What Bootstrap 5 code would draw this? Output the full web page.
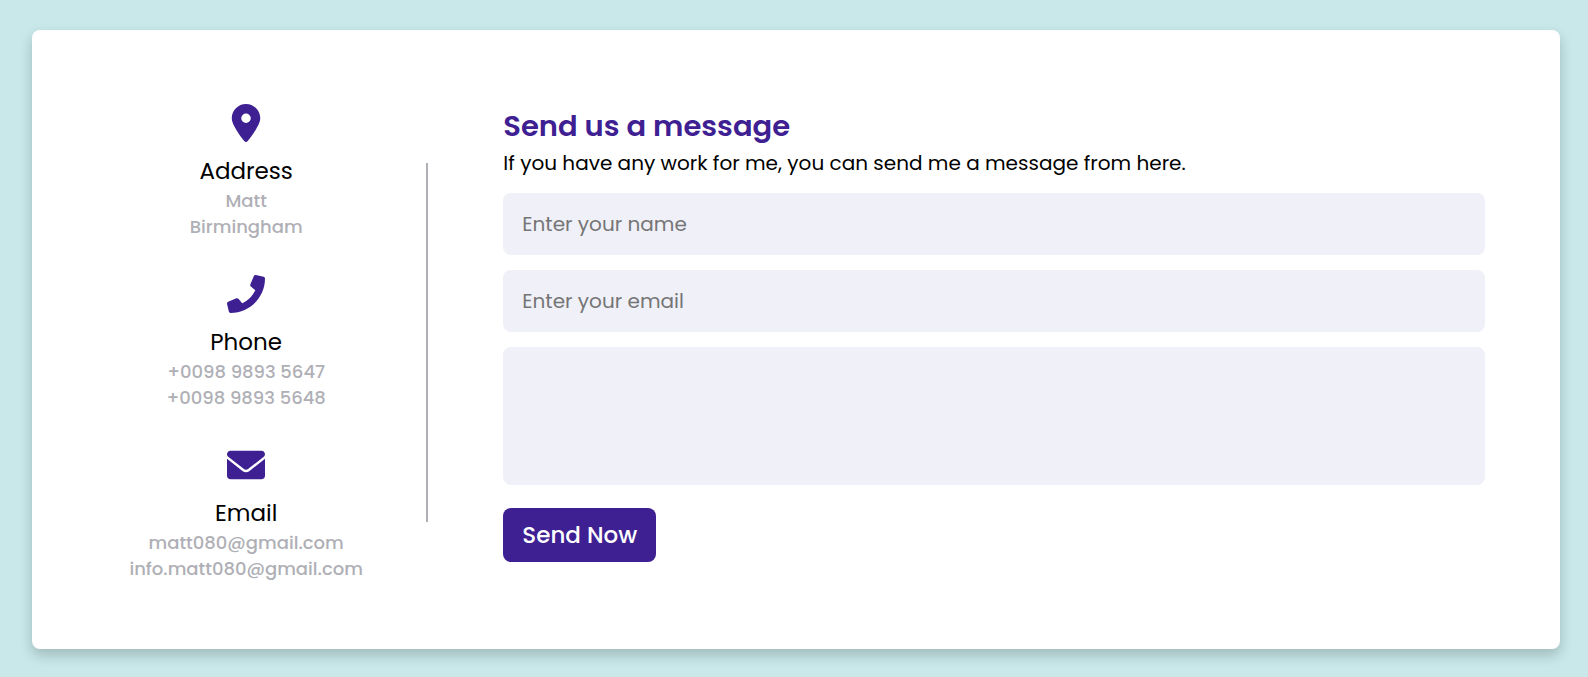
<!DOCTYPE html>
<html lang="en">
<head>
<meta charset="utf-8">
<meta name="viewport" content="width=device-width, initial-scale=1">
<title>Contact us</title>
<link href="https://cdn.jsdelivr.net/npm/bootstrap@5.3.0/dist/css/bootstrap.min.css" rel="stylesheet">
<style>
  body { background: #c8e8e9; color: #000; font-family: Poppins, Inter, sans-serif; }
  .page { padding: 30px 28px 28px 32px; }
  .contact { border-radius: 8px; padding: 74px 75px 67px 50px; box-shadow: 0 6px 13px rgba(0, 0, 0, .2); }
  .details { gap: 35px; }
  .icon { width: 38px; height: 38px; margin-bottom: 12px; fill: #3e2093; }
  .topic { font-size: 23px; line-height: 34px; font-weight: 400; }
  .detail { font-size: 18px; line-height: 26px; font-weight: 500; color: #afafb6; }
  .form-title { font-size: 29px; line-height: 44px; font-weight: 600; color: #3e2093; }
  .intro { font-size: 20px; line-height: 30px; }
  .fields { gap: 15px; margin: 15px 0 23px; }
  .field { background: #f0f0f8; border: 0; border-radius: 8px; padding: 0 19px; font-size: 20px; height: 62px; }
  .field:focus { background: #f0f0f8; }
  .field::placeholder { color: #757575; }
  textarea.field { height: 138px; padding: 12px 19px; resize: none; }
  .send { --bs-btn-bg: #3e2093; --bs-btn-color: #fff; --bs-btn-hover-bg: #5029bc; --bs-btn-hover-color: #fff;
    border: 0; border-radius: 8px; padding: 10px 19px; font-size: 23px; line-height: 34px; font-weight: 500; }
  @media (min-width: 992px) {
    .details { flex: 0 0 23.4%; }
    .divider { width: 2px; background: #afafb6; margin: 59px 75px 60px 16px; }
  }
  @media (max-width: 991px) {
    .contact { padding: 40px 24px; }
    .divider { height: 40px; }
  }
</style>
</head>
<body>
<main class="page">
  <section class="contact bg-white d-flex flex-column flex-lg-row">
    <div class="details d-flex flex-column text-center">
      <div>
        <svg class="icon d-block mx-auto" viewBox="0 0 384 512" aria-hidden="true"><path d="M215.7 499.2C267 435 384 279.4 384 192C384 86 298 0 192 0S0 86 0 192c0 87.4 117 243 168.3 307.2c12.3 15.3 35.1 15.3 47.4 0zM192 128a64 64 0 1 1 0 128 64 64 0 1 1 0-128z"/></svg>
        <h2 class="topic m-0">Address</h2>
        <div class="detail">Matt</div>
        <div class="detail">Birmingham</div>
      </div>
      <div>
        <svg class="icon d-block mx-auto" viewBox="0 0 512 512" aria-hidden="true"><path d="M493.4 24.6l-104-24c-11.3-2.6-22.9 3.3-27.5 13.9l-48 112c-4.2 9.8-1.4 21.3 6.9 28l60.6 49.6c-36 76.7-98.9 140.5-177.2 177.2l-49.6-60.6c-6.8-8.3-18.2-11.1-28-6.9l-112 48C3.9 366.5-2 378.1.6 389.4l24 104C27.1 504.2 36.7 512 48 512c256.1 0 464-207.5 464-464 0-11.2-7.7-20.9-18.6-23.4z"/></svg>
        <h2 class="topic m-0">Phone</h2>
        <div class="detail">+0098 9893 5647</div>
        <div class="detail">+0098 9893 5648</div>
      </div>
      <div>
        <svg class="icon d-block mx-auto" viewBox="0 0 512 512" aria-hidden="true"><path d="M256 352c-16.53 0-33.06-5.422-47.16-16.41L0 173.2V400C0 426.5 21.49 448 48 448h416c26.51 0 48-21.49 48-48V173.2l-208.8 162.5C289.1 346.6 272.5 352 256 352zM16.29 145.3l212.2 165.1c16.19 12.6 38.87 12.6 55.06 0l212.2-165.1C505.1 137.3 512 125 512 112C512 85.49 490.5 64 464 64h-416C21.49 64 0 85.49 0 112C0 125 6.01 137.3 16.29 145.3z"/></svg>
        <h2 class="topic m-0">Email</h2>
        <div class="detail">matt080@gmail.com</div>
        <div class="detail">info.matt080@gmail.com</div>
      </div>
    </div>
    <div class="divider flex-shrink-0"></div>
    <form class="flex-grow-1">
      <h1 class="form-title m-0">Send us a message</h1>
      <p class="intro m-0">If you have any work for me, you can send me a message from here.</p>
      <div class="fields d-flex flex-column">
        <input class="field form-control" type="text" placeholder="Enter your name" aria-label="Enter your name">
        <input class="field form-control" type="email" placeholder="Enter your email" aria-label="Enter your email">
        <textarea class="field form-control" aria-label="Message"></textarea>
      </div>
      <button class="send btn" type="button">Send Now</button>
    </form>
  </section>
</main>
<script src="https://cdn.jsdelivr.net/npm/bootstrap@5.3.0/dist/js/bootstrap.bundle.min.js"></script>
</body>
</html>
